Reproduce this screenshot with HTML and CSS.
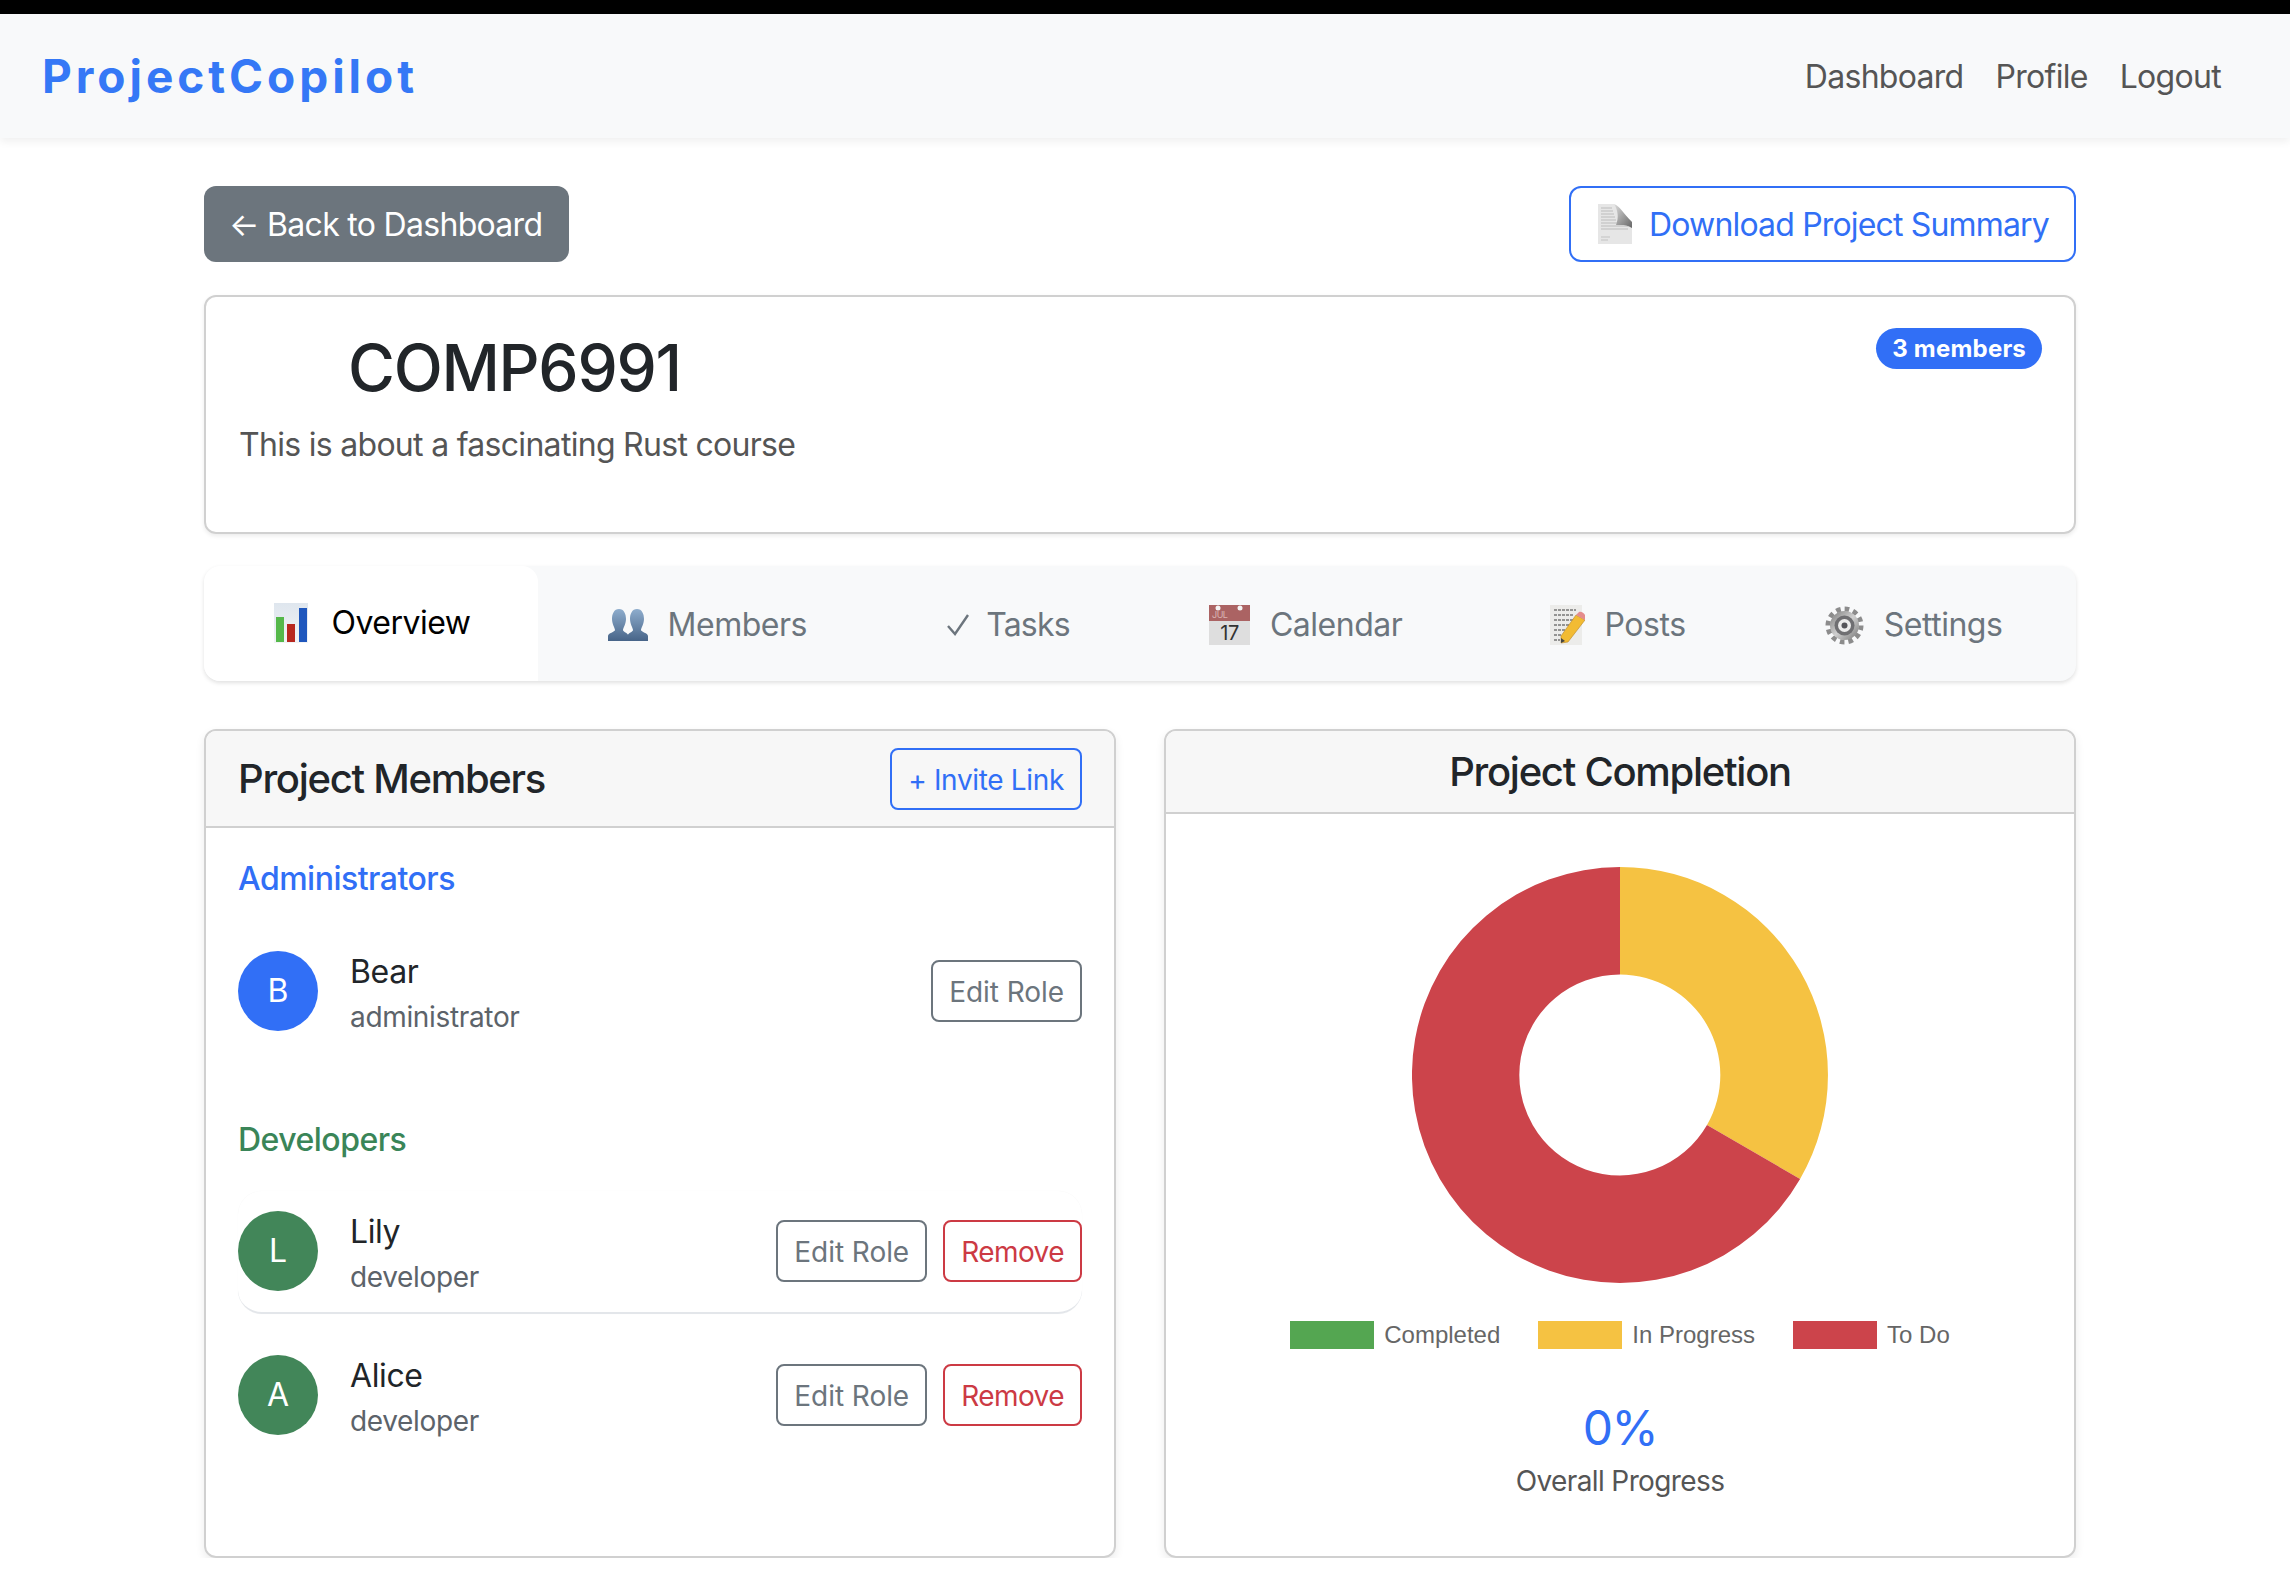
FILE: index.html
```html
<!DOCTYPE html>
<html lang="en">

<head>
  <meta charset="UTF-8" />
  <meta name="viewport" content="width=device-width, initial-scale=1.0" />
  <title>ProjectCopilot</title>
  <link rel="stylesheet" href="styles.css">
</head>

<body>
  <div class="topbar"></div>
  <nav class="navbar">
    <a class="brand" href="#">ProjectCopilot</a>
    <div class="nav-links">
      <a href="#">Dashboard</a>
      <a href="#">Profile</a>
      <a href="#">Logout</a>
    </div>
  </nav>

  <main class="container">
    <div class="actions">
      <a class="btn btn-back" href="#">← Back to Dashboard</a>
      <a class="btn btn-download" href="#">
        <svg class="icon-page" width="34" height="40" viewBox="0 0 34 40">
          <defs>
            <linearGradient id="curl" x1="0" y1="0" x2="1" y2="1">
              <stop offset="0" stop-color="#dcdcdc" />
              <stop offset="1" stop-color="#666" />
            </linearGradient>
          </defs>
          <path d="M0 0H16L34 18V40H0Z" fill="#e6e6e6" />
          <path d="M3 4H14M3 7H15M3 10H16M3 13H17M3 16H18M3 19H24M3 22H30M3 25H30" stroke="#bcbcbc" stroke-width="1.2" />
          <path d="M16 0C22 2 25 9 34 18V24C28 20 23 21 18 21C21 14 20 6 16 0Z" fill="url(#curl)" />
          <path d="M3 33H12M3 36H10" stroke="#c2c2c2" stroke-width="1.2" />
        </svg>
        Download Project Summary
      </a>
    </div>

    <section class="project-card">
      <div class="project-info">
        <h1>COMP6991</h1>
        <p>This is about a fascinating Rust course</p>
      </div>
      <span class="badge">3 members</span>
    </section>

    <div class="tabs">
      <a class="tab active" href="#">
        <svg class="tab-icon" width="34" height="40" viewBox="0 0 34 40">
          <defs>
            <linearGradient id="chartbg" x1="0" y1="0" x2="0" y2="1">
              <stop offset="0" stop-color="#dfe6ee" />
              <stop offset="1" stop-color="#f2f4f6" />
            </linearGradient>
          </defs>
          <rect width="34" height="40" fill="url(#chartbg)" />
          <rect x="2" y="14" width="8" height="25" fill="#55b84a" />
          <rect x="13" y="21" width="8" height="18" fill="#b8281f" />
          <rect x="25" y="5" width="8" height="34" fill="#1f57bd" />
        </svg>
        Overview
      </a>
      <a class="tab" href="#">
        <svg class="tab-icon" width="40" height="32" viewBox="0 0 40 32">
          <defs>
            <linearGradient id="people" x1="0" y1="0" x2="0" y2="1">
              <stop offset="0" stop-color="#8eadcd" />
              <stop offset="1" stop-color="#476488" />
            </linearGradient>
          </defs>
          <path d="M11 0C16 0 18 5 18 10C18 15 15 19 15 21C15 23 20 24 20 26C20 24 25 23 25 21C25 19 22 15 22 10C22 5 24 0 29 0C34 0 36 5 36 10C36 15 33 19 33 21C33 23 40 24 40 27V32H0V27C0 24 7 23 7 21C7 19 4 15 4 10C4 5 6 0 11 0Z" fill="url(#people)" />
        </svg>
        Members
      </a>
      <a class="tab tab-tasks" href="#">
        <svg class="tab-icon" width="24" height="24" viewBox="0 0 24 24">
          <path d="M2 13L9 21L22 2" fill="none" stroke="#6c757d" stroke-width="2.4" />
        </svg>
        Tasks
      </a>
      <a class="tab tab-calendar" href="#">
        <svg class="tab-icon" width="41" height="40" viewBox="0 0 41 40">
          <rect width="41" height="40" fill="#dedede" />
          <rect width="41" height="16" fill="#ab6363" />
          <circle cx="9" cy="3" r="2.5" fill="#f4f4f4" />
          <circle cx="31" cy="3" r="2.5" fill="#f4f4f4" />
          <text x="3" y="13" class="cal-month">JUL</text>
          <text x="20.5" y="34.5" class="cal-day">17</text>
        </svg>
        Calendar
      </a>
      <a class="tab" href="#">
        <svg class="tab-icon" width="35" height="40" viewBox="0 0 35 40">
          <rect width="32" height="40" fill="#ececea" />
          <path d="M4 5H26M4 10H24M4 15H27M4 20H19M4 25H15M4 30H12M4 35H10" stroke="#3d3d3d" stroke-width="1.1" stroke-dasharray="3 1" />
          <path d="M26 10L35 15L18 37L11 38L11 31Z" fill="#f2bb33" stroke="#b8862a" stroke-width="0.6" />
          <path d="M26 10L29 7C31 6 34 8 35 10L35 15Z" fill="#e58c8c" />
          <path d="M11 38L11 33L15 36Z" fill="#444" />
        </svg>
        Posts
      </a>
      <a class="tab tab-settings" href="#">
        <svg class="tab-icon" width="39" height="39" viewBox="0 0 39 39">
          <defs>
            <linearGradient id="gear" x1="0" y1="0" x2="1" y2="1">
              <stop offset="0" stop-color="#7b7b7b" />
              <stop offset="0.5" stop-color="#cfcfcf" />
              <stop offset="1" stop-color="#777" />
            </linearGradient>
          </defs>
          <circle cx="19.5" cy="19.5" r="16.5" fill="none" stroke="#8c8c8c" stroke-width="5" stroke-dasharray="4.6 4" />
          <circle cx="19.5" cy="19.5" r="14.5" fill="url(#gear)" />
          <circle cx="19.5" cy="19.5" r="10" fill="#6f6f72" />
          <circle cx="19.5" cy="19.5" r="6.5" fill="#ededed" />
          <circle cx="19.5" cy="19.5" r="3" fill="#55555a" />
        </svg>
        Settings
      </a>
    </div>

    <div class="columns">
      <section class="card">
        <header class="card-header members-header">
          <h2>Project Members</h2>
          <a class="btn btn-sm btn-outline-primary" href="#">+ Invite Link</a>
        </header>
        <div class="card-body">
          <h3 class="group-title admin-title">Administrators</h3>
          <div class="member">
            <div class="avatar avatar-admin">B</div>
            <div class="member-info">
              <div class="member-name">Bear</div>
              <div class="member-role">administrator</div>
            </div>
            <div class="member-actions">
              <a class="btn btn-sm btn-outline-secondary" href="#">Edit Role</a>
            </div>
          </div>

          <h3 class="group-title dev-title">Developers</h3>
          <div class="member member-divided">
            <div class="avatar avatar-dev">L</div>
            <div class="member-info">
              <div class="member-name">Lily</div>
              <div class="member-role">developer</div>
            </div>
            <div class="member-actions">
              <a class="btn btn-sm btn-outline-secondary" href="#">Edit Role</a>
              <a class="btn btn-sm btn-outline-danger" href="#">Remove</a>
            </div>
          </div>
          <div class="member">
            <div class="avatar avatar-dev">A</div>
            <div class="member-info">
              <div class="member-name">Alice</div>
              <div class="member-role">developer</div>
            </div>
            <div class="member-actions">
              <a class="btn btn-sm btn-outline-secondary" href="#">Edit Role</a>
              <a class="btn btn-sm btn-outline-danger" href="#">Remove</a>
            </div>
          </div>
        </div>
      </section>

      <section class="card">
        <header class="card-header completion-header">
          <h2>Project Completion</h2>
        </header>
        <div class="chart-body">
          <!-- in progress 1 task, to do 2 tasks -->
          <svg class="donut" width="416" height="416" viewBox="0 0 416 416">
            <path d="M208 0A208 208 0 0 1 388.1 312L295 258A100.5 100.5 0 0 0 208 107.5Z" fill="#f5c242" />
            <path d="M388.1 312A208 208 0 1 1 208 0V107.5A100.5 100.5 0 1 0 295 258Z" fill="#cc444b" />
          </svg>
          <div class="legend">
            <span class="legend-item"><i class="swatch swatch-done"></i>Completed</span>
            <span class="legend-item"><i class="swatch swatch-progress"></i>In Progress</span>
            <span class="legend-item"><i class="swatch swatch-todo"></i>To Do</span>
          </div>
          <div class="percent">0%</div>
          <div class="percent-label">Overall Progress</div>
        </div>
      </section>
    </div>
  </main>
</body>

</html>
```

FILE: styles.css
```css
body {
  margin: 0;
  background: #fff;
  color: #212529;
  font-family: Inter, 'Liberation Sans', sans-serif;
  font-size: 32px;
  line-height: 1.5;
}

a {
  text-decoration: none;
}

.topbar {
  height: 14px;
  background: #000;
}

.navbar {
  height: 124px;
  padding: 0 69px 0 42px;
  display: flex;
  justify-content: space-between;
  align-items: center;
  background: #f8f9fa;
  box-shadow: 0 4px 8px rgba(0, 0, 0, 0.06);
}

.brand {
  color: #3578f6;
  font-size: 46px;
  font-weight: 700;
  letter-spacing: 3.95px;
}

.nav-links {
  padding-top: 2px;
  display: flex;
  gap: 32px;
  letter-spacing: -0.022em;
}

.nav-links a {
  color: #555;
}

.container {
  width: 1872px;
  margin-left: 204px;
  padding-top: 48px;
}

.actions {
  display: flex;
  justify-content: space-between;
  margin-bottom: 33px;
}

.btn {
  display: inline-flex;
  align-items: center;
  box-sizing: border-box;
  padding-top: 2px;
  border: 2px solid transparent;
  border-radius: 12px;
  white-space: nowrap;
}

.btn-back {
  height: 76px;
  padding-left: 23px;
  padding-right: 25px;
  background: #6c757d;
  color: #fff;
  letter-spacing: -0.022em;
}

.btn-download {
  height: 76px;
  padding-left: 27px;
  padding-right: 25px;
  gap: 17px;
  background: #fff;
  border-color: #316ff6;
  color: #316ff6;
  letter-spacing: -0.026em;
}

.icon-page {
  flex: none;
  margin-top: -2px;
}

.btn-sm {
  height: 62px;
  padding-left: 16px;
  padding-right: 16px;
  border-radius: 8px;
  font-size: 28px;
  letter-spacing: -0.012em;
}

.btn-outline-primary {
  border-color: #316ff6;
  color: #316ff6;
}

.btn-outline-secondary {
  border-color: #6c757d;
  color: #6c757d;
  letter-spacing: -0.002em;
}

.btn-outline-danger {
  border-color: #cc3a44;
  color: #cc3a44;
  letter-spacing: -0.02em;
}

.project-card {
  height: 239px;
  box-sizing: border-box;
  padding: 33px 32px 0 33px;
  display: flex;
  justify-content: space-between;
  align-items: flex-start;
  border: 2px solid #d0d0d0;
  border-radius: 12px;
  box-shadow: 0 2px 4px rgba(0, 0, 0, 0.08);
}

.project-info {
  flex: 1;
}

.project-card h1 {
  margin: 0 0 14px 109px;
  font-size: 64px;
  font-weight: 500;
  line-height: 1.2;
  letter-spacing: -0.02em;
}

.project-card p {
  margin: 0;
  color: #555;
  letter-spacing: -0.022em;
}

.badge {
  height: 41px;
  margin-top: -2px;
  padding: 0 16px;
  background: #316ff6;
  border-radius: 21px;
  color: #fff;
  font-size: 24px;
  font-weight: 700;
  line-height: 41px;
  letter-spacing: 0.2px;
}

.tabs {
  height: 115px;
  margin: 32px 0 48px;
  display: flex;
  background: #f8f9fa;
  border-radius: 16px;
  box-shadow: 0 2px 4px rgba(0, 0, 0, 0.12);
  letter-spacing: -0.015em;
}

.tab {
  flex: auto;
  box-sizing: border-box;
  padding-top: 3px;
  display: flex;
  justify-content: center;
  align-items: center;
  gap: 20px;
  color: #6c757d;
}

.tab.active {
  flex: none;
  width: 334px;
  padding: 0 0 1px 3px;
  gap: 23px;
  background: #fff;
  border-radius: 16px 16px 0 16px;
  color: #000;
}

.tab-tasks {
  gap: 16px;
  letter-spacing: -0.025em;
}

.tab-calendar {
  padding-right: 8px;
}

.tab-settings {
  padding-right: 4px;
}

.tab-icon {
  flex: none;
}

.cal-month {
  fill: #d9b3b3;
  font-size: 9px;
}

.cal-day {
  fill: #333;
  font-size: 20px;
  text-anchor: middle;
}

.columns {
  display: grid;
  grid-template-columns: 1fr 1fr;
  gap: 48px;
}

.card {
  height: 829px;
  box-sizing: border-box;
  border: 2px solid #d0d0d0;
  border-radius: 12px;
  box-shadow: 0 4px 10px rgba(0, 0, 0, 0.08);
}

.card-header {
  box-sizing: border-box;
  background: #f7f7f7;
  border-bottom: 2px solid #d0d0d0;
  border-radius: 10px 10px 0 0;
}

.card-header h2 {
  margin: 0;
  font-size: 40px;
  font-weight: 500;
  line-height: 1.2;
  letter-spacing: -0.032em;
}

.members-header {
  height: 97px;
  padding: 0 32px;
  display: flex;
  justify-content: space-between;
  align-items: center;
}

.completion-header {
  height: 83px;
  padding-top: 17px;
  text-align: center;
}

.card-body {
  padding: 32px 32px 0;
}

.group-title {
  margin: 0;
  font-size: 32px;
  font-weight: 500;
  line-height: 1.2;
  letter-spacing: -0.016em;
}

.admin-title {
  margin-bottom: 31px;
  color: #316ff6;
}

.dev-title {
  margin-top: 69px;
  margin-bottom: 31px;
  color: #3a8558;
}

.member {
  height: 123px;
  box-sizing: border-box;
  display: flex;
  align-items: center;
  border-radius: 24px;
}

.member-divided {
  margin-bottom: 20px;
  border-bottom: 2px solid #e3e6ea;
  box-shadow: 0 0 1px rgba(0, 0, 0, 0.06);
}

.avatar {
  width: 80px;
  height: 80px;
  flex: none;
  margin-right: 32px;
  display: flex;
  justify-content: center;
  align-items: center;
  border-radius: 50%;
  color: #fff;
}

.avatar-admin {
  background: #316ff6;
}

.avatar-dev {
  background: #428659;
}

.member-info {
  flex: 1;
  padding-top: 5px;
}

.member-name {
  line-height: 44px;
  letter-spacing: -0.012em;
}

.member-role {
  margin-top: 3px;
  color: #5c636a;
  font-size: 28px;
  line-height: 40px;
  letter-spacing: -0.012em;
}

.member-actions {
  display: flex;
  gap: 16px;
}

.chart-body {
  padding-top: 53px;
  display: flex;
  flex-direction: column;
  align-items: center;
}

.legend {
  margin-top: 38px;
  display: flex;
  gap: 38px;
  color: #666;
  font-family: 'Liberation Sans', sans-serif;
  font-size: 24px;
  line-height: 28px;
}

.legend-item {
  display: flex;
  gap: 10px;
}

.swatch {
  width: 84px;
  height: 28px;
}

.swatch-done {
  background: #54a651;
}

.swatch-progress {
  background: #f5c242;
}

.swatch-todo {
  background: #cc444b;
}

.percent {
  margin-top: 50px;
  color: #316ff6;
  font-size: 48px;
  line-height: 1.2;
  letter-spacing: -0.03em;
}

.percent-label {
  margin-top: 3px;
  color: #555;
  font-size: 28px;
  line-height: 1.5;
  letter-spacing: -0.022em;
}
```
